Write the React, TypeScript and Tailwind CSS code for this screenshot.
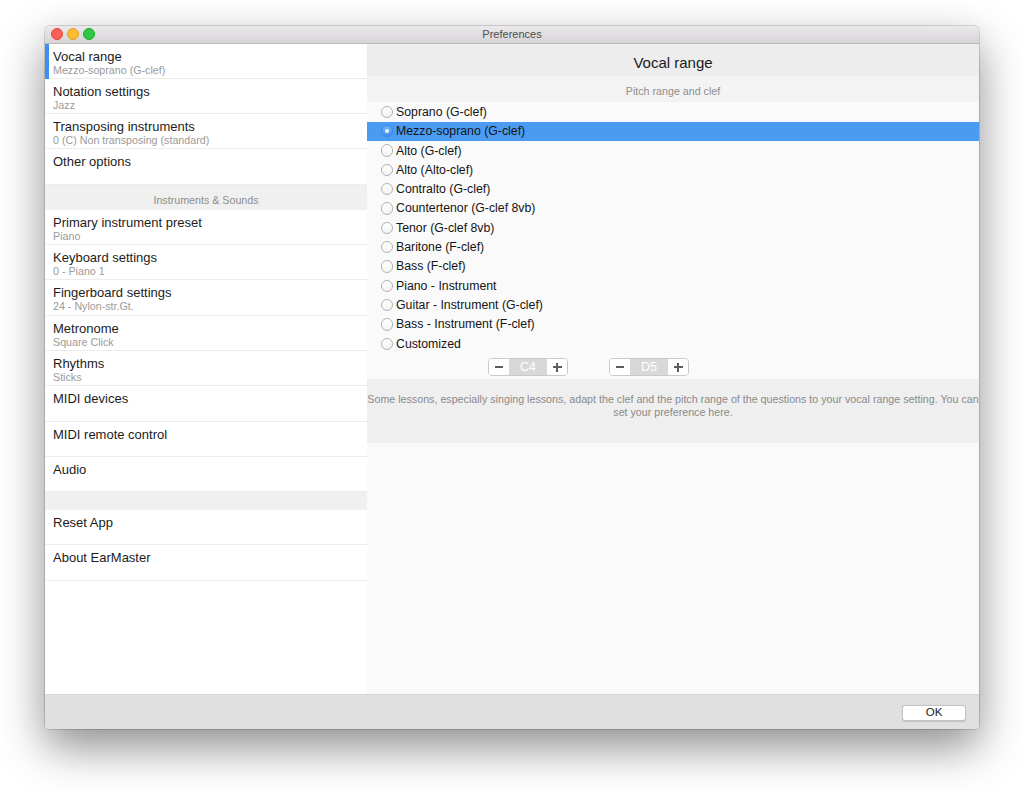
import React from "react";

const groupA = [
  { t: "Vocal range", s: "Mezzo-soprano (G-clef)", sel: true },
  { t: "Notation settings", s: "Jazz" },
  { t: "Transposing instruments", s: "0 (C) Non transposing (standard)" },
  { t: "Other options", s: "" },
];
const groupB = [
  { t: "Primary instrument preset", s: "Piano" },
  { t: "Keyboard settings", s: "0 - Piano 1" },
  { t: "Fingerboard settings", s: "24 - Nylon-str.Gt." },
  { t: "Metronome", s: "Square Click" },
  { t: "Rhythms", s: "Sticks" },
  { t: "MIDI devices", s: "" },
  { t: "MIDI remote control", s: "" },
  { t: "Audio", s: "" },
];
const groupC = [
  { t: "Reset App", s: "" },
  { t: "About EarMaster", s: "" },
];

const ranges = [
  "Soprano (G-clef)",
  "Mezzo-soprano (G-clef)",
  "Alto (G-clef)",
  "Alto (Alto-clef)",
  "Contralto (G-clef)",
  "Countertenor (G-clef 8vb)",
  "Tenor (G-clef 8vb)",
  "Baritone (F-clef)",
  "Bass (F-clef)",
  "Piano - Instrument",
  "Guitar - Instrument (G-clef)",
  "Bass - Instrument (F-clef)",
  "Customized",
];

function Row({ t, s, sel }: { t: string; s: string; sel?: boolean }) {
  return (
    <div className="relative h-[35.33px] border-b border-[#ececec] bg-white pl-[8px] pt-[5px]">
      {sel && <div className="absolute left-0 top-0 bottom-[-1px] w-[4px] bg-[#3a8ff0]" />}
      <div className="text-[13px] leading-[15px] text-[#1c1c1c]">{t}</div>
      {s && <div className="text-[10.7px] leading-[12px] text-[#9a9a9a]">{s}</div>}
    </div>
  );
}

function Stepper({ v }: { v: string }) {
  return (
    <div className="flex h-[18px] w-[80px] overflow-hidden rounded-[4px] border border-[#c9c9c9] bg-white">
      <div className="flex w-[20px] items-center justify-center bg-white">
        <div className="h-[2px] w-[8px] bg-[#5c5c5c]" />
      </div>
      <div className="flex flex-1 items-center justify-center bg-[#d8d8d8] text-[12.5px] text-white">{v}</div>
      <div className="relative flex w-[20px] items-center justify-center bg-white">
        <div className="h-[2px] w-[9px] bg-[#5c5c5c]" />
        <div className="absolute h-[9px] w-[2px] bg-[#5c5c5c]" />
      </div>
    </div>
  );
}

export default function App() {
  return (
    <div
      className="min-h-[794px] bg-white pt-[26px]"
      style={{ fontFamily: '"Liberation Sans", Arial, sans-serif' }}
    >
      <div className="mx-auto flex h-[703px] w-[934px] flex-col overflow-hidden rounded-t-[5px] rounded-b-[4px] shadow-[0_0_0_1px_rgba(0,0,0,0.14),0_18px_45px_rgba(0,0,0,0.45)]">
        {/* Title bar */}
        <div className="relative flex h-[17.5px] shrink-0 items-center border-b border-[#b9b9b9] bg-gradient-to-b from-[#ebe9eb] to-[#d6d4d6] pl-[6px]">
          <div className="flex gap-[4px]">
            <div className="h-[12px] w-[12px] rounded-full border border-[#e0443e] bg-[#fc5f57]" />
            <div className="h-[12px] w-[12px] rounded-full border border-[#dea123] bg-[#fdbc2e]" />
            <div className="h-[12px] w-[12px] rounded-full border border-[#1aab29] bg-[#33c748]" />
          </div>
          <div className="absolute inset-0 flex items-center justify-center text-[11px] text-[#4d4d4d]">Preferences</div>
        </div>

        {/* Content */}
        <div className="flex flex-1">
          {/* Sidebar */}
          <div className="flex w-[322px] flex-col bg-white">
            {groupA.map((r) => (
              <Row key={r.t} {...r} />
            ))}
            <div className="h-[25px] bg-[#f0f0f0] pt-[9px] text-center text-[10.7px] leading-[12px] text-[#8e8e8e]">
              Instruments &amp; Sounds
            </div>
            {groupB.map((r) => (
              <Row key={r.t} {...r} />
            ))}
            <div className="h-[17.5px] bg-[#f0f0f0]" />
            {groupC.map((r) => (
              <Row key={r.t} {...r} />
            ))}
            <div className="flex-1 bg-white" />
          </div>

          {/* Main panel */}
          <div className="flex flex-1 flex-col bg-[#fafafa]">
            <div className="h-[32.7px] bg-[#ededed] pt-[10px] text-center text-[15px] leading-[18px] text-[#1a1a1a]">
              Vocal range
            </div>
            <div className="h-[26px] bg-[#f3f3f3] pt-[8.5px] text-center text-[10.7px] leading-[12px] text-[#8e8e8e]">
              Pitch range and clef
            </div>
            <div className="flex flex-col">
              {ranges.map((r, i) => {
                const sel = i === 1;
                return (
                  <div
                    key={r}
                    className={`flex h-[19.33px] items-center pl-[13.5px] ${sel ? "bg-[#4a9bf1]" : ""}`}
                  >
                    {sel ? (
                      <div className="flex h-[12.5px] w-[12.5px] items-center justify-center rounded-full border border-[#3a86dc] bg-gradient-to-b from-[#6cb3fa] to-[#3d8ef0]">
                        <div className="h-[4px] w-[4px] rounded-full bg-white" />
                      </div>
                    ) : (
                      <div className="h-[12.5px] w-[12.5px] rounded-full border border-[#b3b3b3] bg-gradient-to-b from-white to-[#f4f4f4]" />
                    )}
                    <span className="ml-[3px] text-[12.3px] leading-[14px] text-[#151515]">{r}</span>
                  </div>
                );
              })}
            </div>
            <div className="flex h-[26px] gap-[41px] pl-[121px] pt-[5px]">
              <Stepper v="C4" />
              <Stepper v="D5" />
            </div>
            <div className="h-[64px] bg-[#efefef] pt-[13.5px] text-center text-[10.7px] leading-[13px] text-[#8a8a8a]">
              <div className="whitespace-nowrap">
                Some lessons, especially singing lessons, adapt the clef and the pitch range of the questions to your vocal range setting. You can
              </div>
              <div className="whitespace-nowrap">set your preference here.</div>
            </div>
            <div className="flex-1 bg-[#fafafa]" />
          </div>
        </div>

        {/* Bottom bar */}
        <div className="flex h-[35px] shrink-0 justify-end border-t border-[#d6d6d6] bg-[#e0e0e0] pr-[13px] pt-[10px]">
          <div className="flex h-[16px] w-[64px] items-center justify-center rounded-[3px] border border-[#c4c4c4] bg-white text-[11.5px] text-[#1a1a1a] shadow-[0_0.5px_1px_rgba(0,0,0,0.15)]">
            OK
          </div>
        </div>
      </div>
    </div>
  );
}
